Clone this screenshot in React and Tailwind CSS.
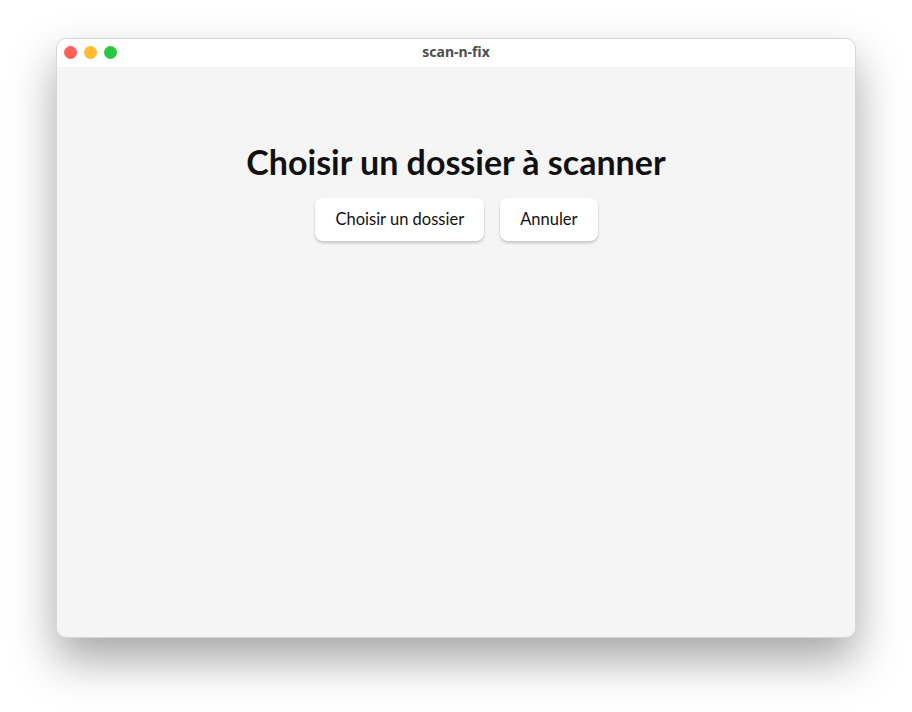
import React from "react";

const App = () => {
  return (
    <div className="w-[912px] h-[712px] bg-white pt-[38px] pl-[56px]" style={{ fontFamily: "Lato, 'Noto Sans', sans-serif" }}>
      {/* Window */}
      <div className="w-[800px] h-[600px] rounded-[10px] overflow-hidden border border-[#d6d6d6] bg-[#f5f5f5] shadow-[0_22px_45px_rgba(0,0,0,0.35)] flex flex-col">
        {/* Title bar */}
        <div className="relative h-[28px] bg-white flex items-center justify-center shrink-0">
          <div className="absolute left-[7px] top-[7px] flex gap-[7px]">
            <span className="w-[13px] h-[13px] rounded-full bg-[#fe5f57]"></span>
            <span className="w-[13px] h-[13px] rounded-full bg-[#febc2e]"></span>
            <span className="w-[13px] h-[13px] rounded-full bg-[#28c840]"></span>
          </div>
          <span className="text-[14px] leading-[20px] -mt-[2px] font-bold text-[#4d4d4d]" style={{ fontFamily: "'Noto Sans', sans-serif" }}>
            scan-n-fix
          </span>
        </div>

        {/* Content */}
        <div className="flex flex-col items-center pt-[75px]">
          <h1 className="text-[34px] leading-[40px] font-bold text-[#111]">
            Choisir un dossier à scanner
          </h1>
          <div className="flex gap-[16px] ml-[1px] mt-[16px]">
            <button className="h-[43px] px-[20px] rounded-[8px] bg-white text-[16.5px] text-[#111] shadow-[0_2px_3px_rgba(0,0,0,0.2)]">
              Choisir un dossier
            </button>
            <button className="h-[43px] px-[20px] rounded-[8px] bg-white text-[16.5px] text-[#111] shadow-[0_2px_3px_rgba(0,0,0,0.2)]">
              Annuler
            </button>
          </div>
        </div>
      </div>
    </div>
  );
};

export default App;
